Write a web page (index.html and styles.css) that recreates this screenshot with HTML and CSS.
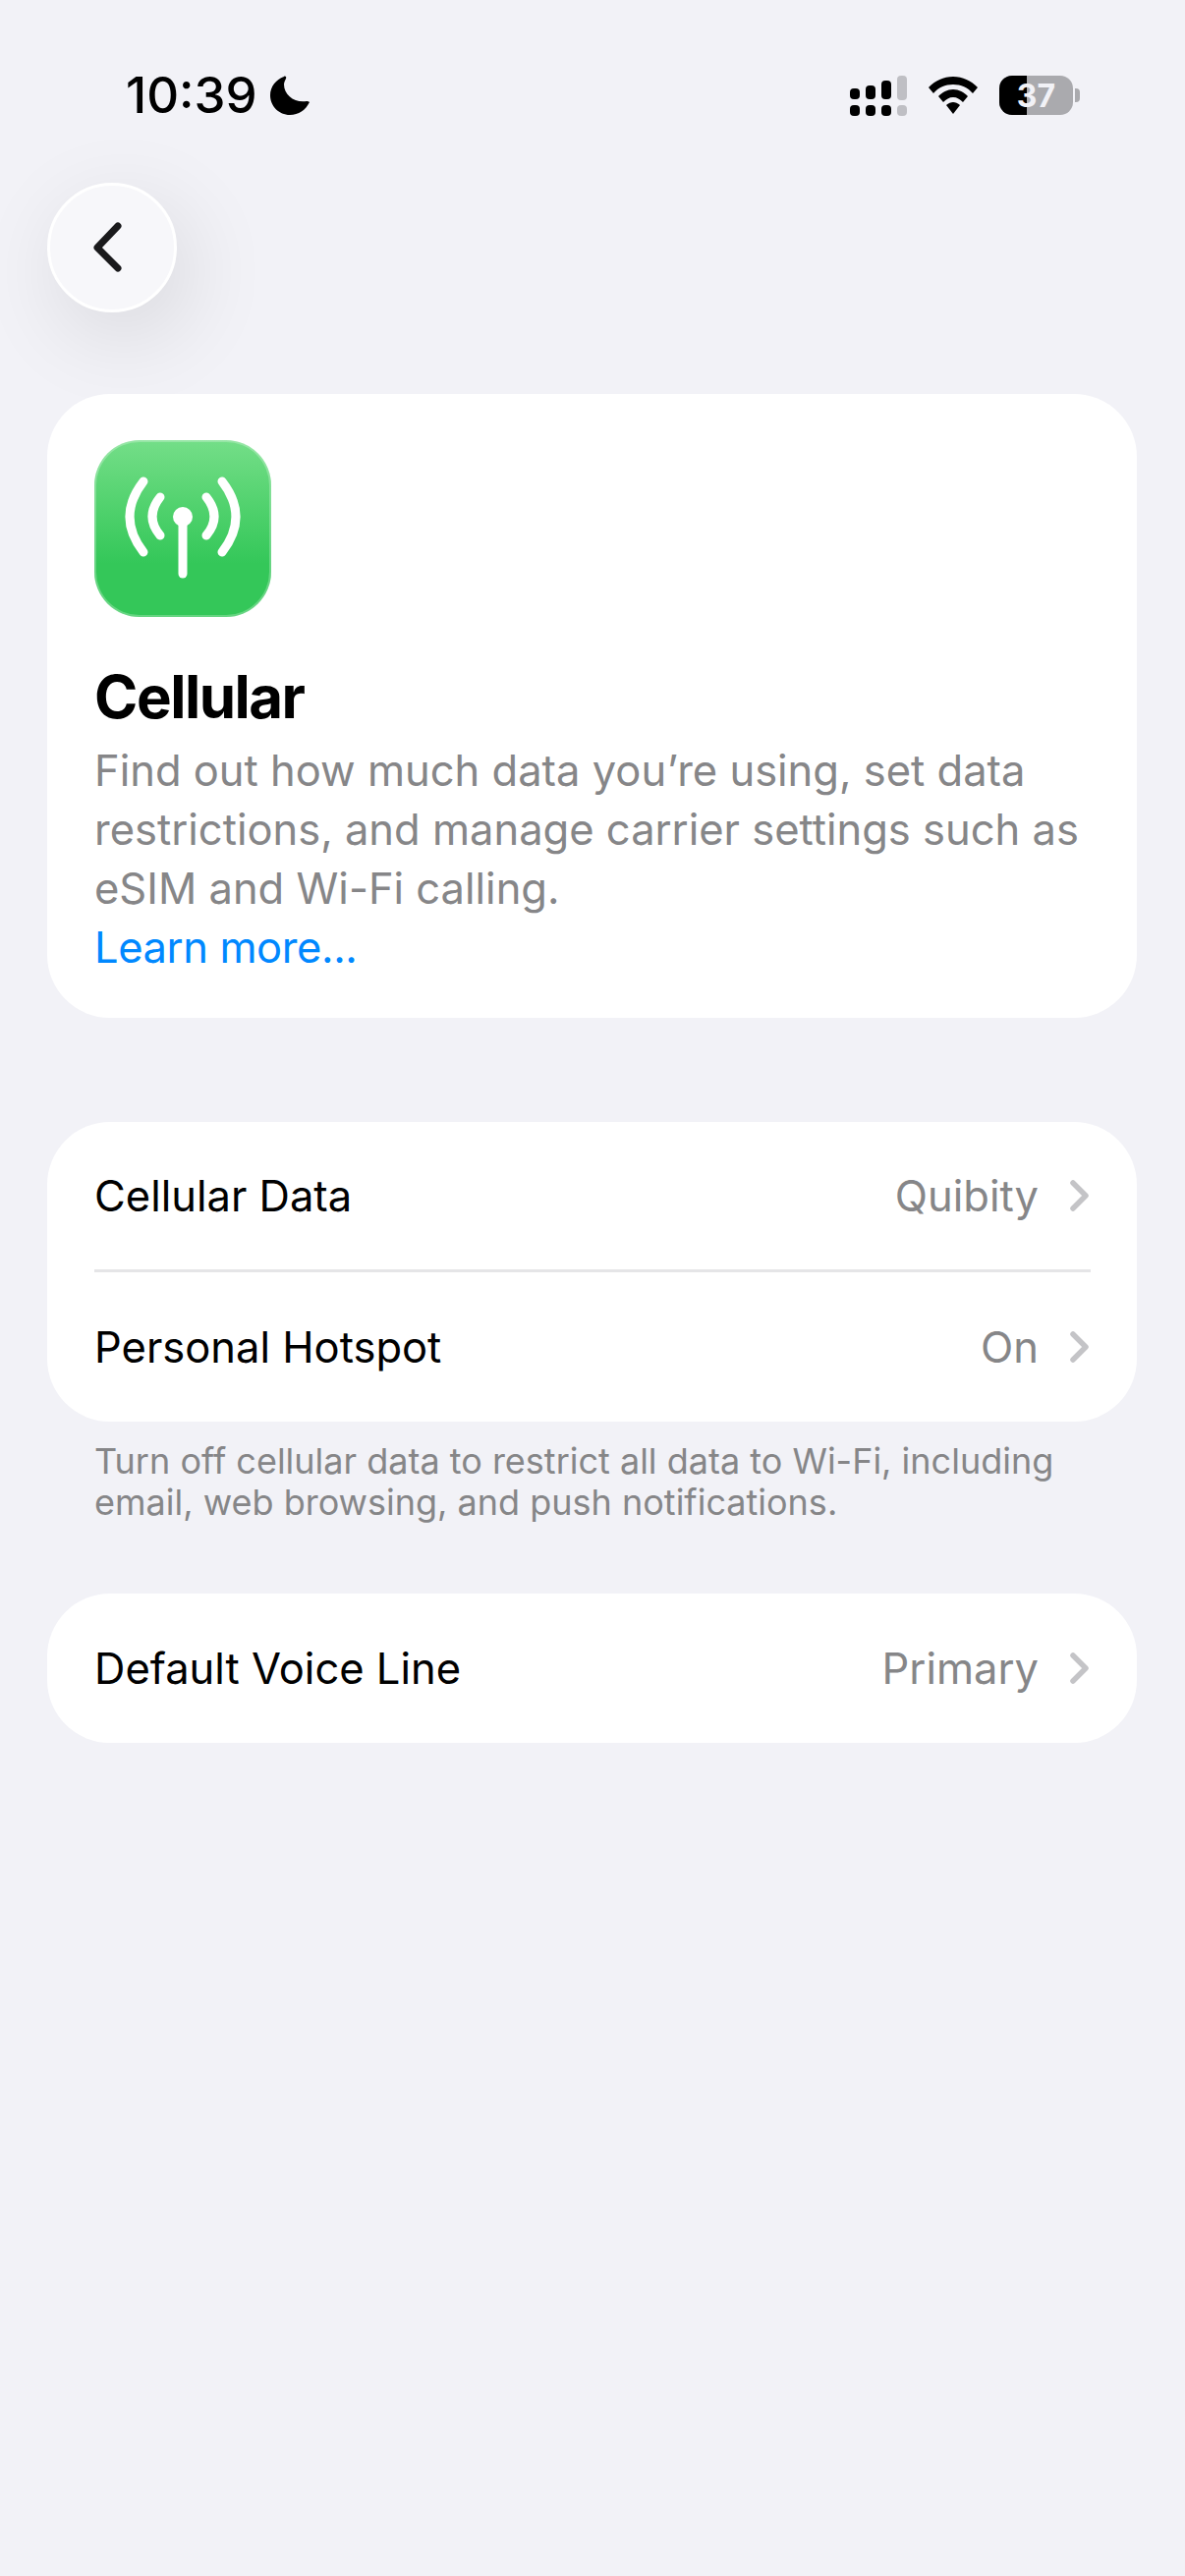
FILE: index.html
```html
<!DOCTYPE html>
<html lang="en">

<head>
    <meta charset="UTF-8">
    <meta name="viewport" content="width=device-width, initial-scale=1.0">
    <title>Cellular</title>
    <link rel="stylesheet" href="styles.css">
</head>

<body>
    <div class="status-bar">
        <div class="status-left">
            <span class="clock">10:39</span>
            <svg class="moon" viewBox="0 0 40 40" width="40" height="40">
                <path d="M14 1 C6 4 0 11 0 20 C0 31 9 40 20 40 C29 40 36 35 40 27 C39 26 38 26 37 26 C25 28 14 20 14 9 C14 7 15 5 16 3 C17 1 15 0 14 1 Z" />
            </svg>
        </div>
        <div class="status-right">
            <svg class="signal" viewBox="0 0 58 41" width="58" height="41">
                <rect x="0" y="13" width="10" height="11" rx="4" />
                <rect x="0" y="30" width="10" height="11" rx="4" />
                <rect x="16" y="10" width="10" height="14" rx="4" />
                <rect x="16" y="30" width="10" height="11" rx="4" />
                <rect x="32" y="5" width="10" height="19" rx="4" />
                <rect x="32" y="30" width="10" height="11" rx="4" />
                <rect class="off" x="48" y="0" width="10" height="25" rx="4" />
                <rect class="off" x="48" y="30" width="10" height="11" rx="4" />
            </svg>
            <svg class="wifi" viewBox="0 0 50 38" width="50" height="38">
                <path d="M25 0 C35 0 43 4 50 11 L45 17 C40 11 33 8 25 8 C17 8 10 11 5 17 L0 11 C7 4 15 0 25 0 Z" />
                <path d="M25 13 C31 13 36 16 40 20 L35 26 C32 23 29 21 25 21 C21 21 18 23 15 26 L10 20 C14 16 19 13 25 13 Z" />
                <path d="M25 26 C27 26 30 27 32 29 L25 38 L18 29 C20 27 23 26 25 26 Z" />
            </svg>
            <div class="battery">
                <div class="battery-body">
                    <div class="battery-fill"></div>
                    <span class="battery-level">37</span>
                </div>
                <div class="battery-cap"></div>
            </div>
        </div>
    </div>

    <div class="nav">
        <button class="back-btn">
            <svg viewBox="0 0 32 54" width="32" height="54">
                <path d="M26 5 L5 27 L26 48" />
            </svg>
        </button>
    </div>

    <div class="card intro">
        <div class="app-icon">
            <svg viewBox="0 0 180 180" width="180" height="180">
                <path d="M50 42 Q22 78 50 114" />
                <path d="M130 42 Q158 78 130 114" />
                <path d="M67 58 Q51 78 67 97" />
                <path d="M114 58 Q130 78 114 97" />
                <circle cx="90" cy="78" r="10" />
                <path d="M90 80 L90 136" />
            </svg>
        </div>
        <h1>Cellular</h1>
        <p>Find out how much data you’re using, set data restrictions, and manage carrier settings such as eSIM and Wi-Fi calling.</p>
        <a class="learn-more">Learn more...</a>
    </div>

    <div class="card list">
        <div class="row">
            <span class="row-label">Cellular Data</span>
            <span class="row-value">Quibity</span>
            <svg class="chevron" viewBox="0 0 22 34" width="22" height="34"><path d="M4 4 L17 17 L4 30" /></svg>
        </div>
        <div class="row">
            <span class="row-label">Personal Hotspot</span>
            <span class="row-value">On</span>
            <svg class="chevron" viewBox="0 0 22 34" width="22" height="34"><path d="M4 4 L17 17 L4 30" /></svg>
        </div>
    </div>
    <p class="footnote">Turn off cellular data to restrict all data to Wi-Fi, including email, web browsing, and push notifications.</p>

    <div class="card list">
        <div class="row">
            <span class="row-label">Default Voice Line</span>
            <span class="row-value">Primary</span>
            <svg class="chevron" viewBox="0 0 22 34" width="22" height="34"><path d="M4 4 L17 17 L4 30" /></svg>
        </div>
    </div>
</body>

</html>
```

FILE: styles.css
```css
* {
    box-sizing: border-box;
}

html,
body {
    height: 100%;
}

body {
    margin: 0;
    padding: 0 49px 0 48px;
    background: #f2f2f7;
    color: #000;
    font-family: Inter, 'Liberation Sans', sans-serif;
    overflow: hidden;
}

/* status bar */
.status-bar {
    display: flex;
    justify-content: space-between;
    align-items: center;
    height: 60px;
    margin-top: 67px;
}

.status-left {
    display: flex;
    align-items: center;
    gap: 13px;
    padding-left: 80px;
}

.clock {
    font-size: 51px;
    font-weight: 500;
    line-height: 60px;
}

.moon {
    display: block;
}

.status-right {
    display: flex;
    align-items: center;
    gap: 22px;
    margin-right: 58px;
}

.signal .off {
    fill: #bfbfc4;
}

.battery {
    display: flex;
    align-items: center;
    gap: 2px;
}

.battery-body {
    position: relative;
    width: 75px;
    height: 40px;
    border-radius: 13px;
    background: #aaaaae;
    overflow: hidden;
    display: flex;
    align-items: center;
    justify-content: center;
}

.battery-fill {
    position: absolute;
    left: 0;
    top: 0;
    bottom: 0;
    width: 28px;
    background: #000;
}

.battery-level {
    position: relative;
    color: #f2f2f7;
    font-size: 32px;
    font-weight: 700;
}

.battery-cap {
    width: 5px;
    height: 14px;
    border-radius: 0 4px 4px 0;
    background: #aaaaae;
}

/* back button */
.nav {
    margin-top: 59px;
    height: 132px;
}

.back-btn {
    display: flex;
    align-items: center;
    justify-content: center;
    width: 132px;
    height: 132px;
    padding: 0 8px 0 0;
    border: 3px solid #fff;
    border-radius: 50%;
    background: #f7f7fa;
    box-shadow: 12px 24px 90px rgba(0, 0, 0, 0.11);
}

.back-btn path {
    fill: none;
    stroke: #1a1a1c;
    stroke-width: 7;
    stroke-linecap: round;
    stroke-linejoin: round;
}

/* cards */
.card {
    background: #fff;
    border-radius: 64px;
}

.intro {
    margin-top: 83px;
    padding: 47px 48px 42px;
}

.app-icon {
    width: 180px;
    height: 180px;
    border-radius: 46px;
    background: linear-gradient(180deg, #74de88 0%, #4fd16c 40%, #34c759 70%, #34c759 100%);
    box-shadow: inset 0 0 0 2px rgba(255, 255, 255, 0.25);
}

.app-icon svg {
    display: block;
}

.app-icon path {
    fill: none;
    stroke: #fff;
    stroke-width: 9;
    stroke-linecap: round;
}

.app-icon circle {
    fill: #fff;
}

h1 {
    margin: 37px 0 0;
    font-size: 60px;
    font-weight: 700;
    line-height: 89px;
    letter-spacing: -1.5px;
}

.intro p {
    margin: 0;
    font-size: 43.5px;
    line-height: 60px;
    color: #868688;
}

.learn-more {
    display: block;
    font-size: 43.5px;
    line-height: 60px;
    letter-spacing: -0.4px;
    color: #0088ff;
}

.list {
    margin-top: 106px;
}

.row {
    display: flex;
    align-items: center;
    height: 152px;
    margin: 0 47px 0 48px;
    font-size: 43.5px;
}

/* first of two rows is a little shorter, the divider sits on the second */
.row:has(+ .row) {
    height: 150px;
}

.row+.row {
    height: 155px;
    padding-top: 3px;
    box-shadow: inset 0 3px 0 #e5e5e7;
}

.row-label {
    flex: 1;
}

.row-value {
    color: #868688;
}

.chevron {
    margin-left: 31px;
}

.chevron path {
    fill: none;
    stroke: #c4c4c7;
    stroke-width: 5.5;
    stroke-linecap: round;
    stroke-linejoin: round;
}

.footnote {
    margin: 19px 48px 0;
    font-size: 36px;
    line-height: 42px;
    color: #868688;
}

.footnote+.list {
    margin-top: 72px;
}
```
